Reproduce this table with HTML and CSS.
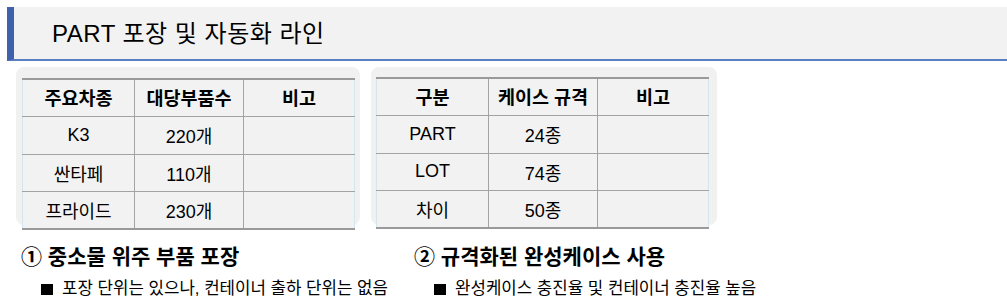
FILE: index.html
```html
<!DOCTYPE html>
<html lang="ko">
<head>
<meta charset="utf-8">
<link rel="stylesheet" href="styles.css">
</head>
<body>
<div class="header">
  <h1 class="title">PART 포장 및 자동화 라인</h1>
</div>
<div class="panels">
  <div class="panel panel-left">
    <table class="grid">
      <colgroup><col class="c1"><col class="c2"><col class="c3"></colgroup>
      <thead><tr><th>주요차종</th><th>대당부품수</th><th>비고</th></tr></thead>
      <tbody>
        <tr><td>K3</td><td>220개</td><td></td></tr>
        <tr><td>싼타페</td><td>110개</td><td></td></tr>
        <tr><td>프라이드</td><td>230개</td><td></td></tr>
      </tbody>
    </table>
  </div>
  <div class="panel panel-right">
    <table class="grid">
      <colgroup><col class="c1"><col class="c2"><col class="c3"></colgroup>
      <thead><tr><th>구분</th><th>케이스 규격</th><th>비고</th></tr></thead>
      <tbody>
        <tr><td>PART</td><td>24종</td><td></td></tr>
        <tr><td>LOT</td><td>74종</td><td></td></tr>
        <tr><td>차이</td><td>50종</td><td></td></tr>
      </tbody>
    </table>
  </div>
</div>
<div class="notes">
  <div class="note">
    <h2 class="note-title">① 중소물 위주 부품 포장</h2>
    <p class="note-item"><span class="sq"></span>포장 단위는 있으나, 컨테이너 출하 단위는 없음</p>
  </div>
  <div class="note">
    <h2 class="note-title">② 규격화된 완성케이스 사용</h2>
    <p class="note-item"><span class="sq"></span>완성케이스 충진율 및 컨테이너 충진율 높음</p>
  </div>
</div>
</body>
</html>
```
FILE: styles.css
```css
* { box-sizing: border-box; }
html, body { margin: 0; padding: 0; background: #ffffff; }
body {
  font-family: "Liberation Sans", "Noto Sans CJK KR", sans-serif;
  color: #000;
  width: 1007px;
  height: 305px;
  overflow: hidden;
}
.header {
  margin: 7px 0 0 7px;
  height: 54px;
  background: #f2f2f2;
  border-left: 7px solid #3f62ad;
  border-bottom: 2px solid #5a7ec2;
  display: flex;
  align-items: center;
  padding-left: 38px;
}
.title {
  margin: 0;
  font-size: 24px;
  font-weight: normal;
  letter-spacing: 0.5px;
  line-height: 1;
  padding-top: 2px;
}
.panels {
  display: flex;
  gap: 11px;
  margin: 6px 0 0 16px;
}
.panel {
  background: #f1f1f1;
  border-radius: 8px;
  height: 158px;
  padding-top: 11px;
}
.panel-left { width: 344px; padding-left: 6px; }
.panel-right { width: 346px; padding-left: 5px; padding-top: 10px; }
.grid {
  border-collapse: collapse;
  table-layout: fixed;
  width: 332px;
  font-size: 18px;
}
.grid .c1 { width: 112px; }
.grid .c2 { width: 109px; }
.grid .c3 { width: 111px; }
.grid th, .grid td {
  height: 37.5px;
  padding: 0;
  text-align: center;
  vertical-align: middle;
  border: 1.5px solid #a3a3a3;
  background: #f2f2f2;
}
.grid th { font-weight: bold; font-size: 18.5px; border-top: 2px solid #9a9a9a; padding-bottom: 3px; }
.grid tr > :first-child { border-left: 1.5px solid #d6e6ef; }
.grid tr > :last-child { border-right: 1.5px solid #d6e6ef; }
.grid tbody tr:last-child td { border-bottom: 2px solid #9a9a9a; }
.notes {
  display: grid;
  grid-template-columns: 393px 1fr;
  margin: 19px 0 0 21px;
}
.note-title {
  margin: 0;
  font-size: 21px;
  font-weight: bold;
  line-height: 26px;
  letter-spacing: 0;
}
.note-item {
  margin: 9px 0 0 20px;
  font-size: 16.8px;
  line-height: 20px;
  display: flex;
  align-items: center;
}
.sq {
  display: inline-block;
  width: 12px;
  height: 11px;
  background: #000;
  margin-right: 9px;
  flex: none;
}
```
